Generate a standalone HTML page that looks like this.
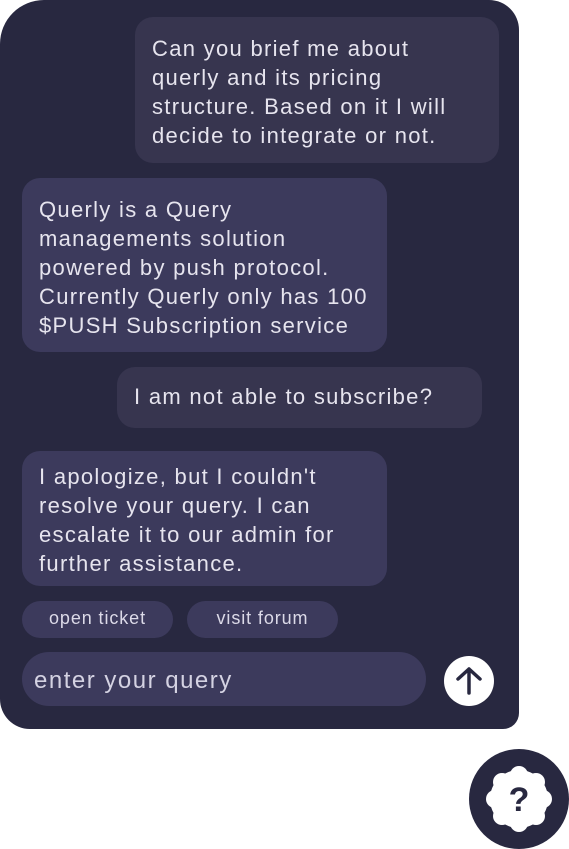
<!DOCTYPE html>
<html><head><style>
body{margin:0;width:569px;height:849px;background:#fff;position:relative;overflow:hidden;font-family:"Liberation Sans",sans-serif;}
.panel{position:absolute;left:0;top:0;width:519px;height:729px;background:#282840;border-radius:44px 30px 16px 30px;}
.b{position:absolute;color:#e6e4ee;font-size:22px;letter-spacing:1.3px;line-height:29px;border-radius:18px;box-sizing:border-box;padding:17px 17px;white-space:nowrap;}
.u{background:#37354f}
.bot{background:#3c3a5c}
.btn{position:absolute;top:601px;height:37px;border-radius:19px;background:#3c3a5c;color:#dcdae8;font-size:18px;letter-spacing:0.9px;line-height:35px;text-align:center;}
</style></head><body>
<div class="panel">
<div class="b u" style="left:135px;top:17px;width:364px;height:146px;">Can you brief me about<br>querly and its pricing<br>structure. Based on it I will<br>decide to integrate or not.</div>
<div class="b bot" style="left:22px;top:178px;width:365px;height:174px;">Querly is a Query<br>managements solution<br>powered by push protocol.<br>Currently Querly only has 100<br>$PUSH Subscription service</div>
<div class="b u" style="left:117px;top:367px;width:365px;height:61px;padding-top:15px;">I am not able to subscribe?</div>
<div class="b bot" style="left:22px;top:451px;width:365px;height:135px;padding-top:11px;">I apologize, but I couldn't<br>resolve your query. I can<br>escalate it to our admin for<br>further assistance.</div>
<div class="btn" style="left:22px;width:151px;">open ticket</div>
<div class="btn" style="left:187px;width:151px;">visit forum</div>
<div style="position:absolute;left:22px;top:652px;width:404px;height:54px;border-radius:27px;background:#3c3a5c;color:#d4d2e2;font-size:24px;letter-spacing:1.5px;line-height:57px;padding-left:12px;box-sizing:border-box;">enter your query</div>
<svg style="position:absolute;left:444px;top:656px" width="50" height="50" viewBox="0 0 50 50"><circle cx="25" cy="25" r="25" fill="#fff"/><path d="M25 37V13M14 23L25 13L36 23" stroke="#282840" stroke-width="3.5" fill="none" stroke-linecap="round" stroke-linejoin="round"/></svg>
</div>
<svg style="position:absolute;left:469px;top:749px" width="100" height="100" viewBox="0 0 100 100"><circle cx="50" cy="50" r="50" fill="#282840"/>
<g fill="#fff"><circle cx="50" cy="50" r="29"/><circle cx="50" cy="26" r="9"/><circle cx="67" cy="33" r="9"/><circle cx="74" cy="50" r="9"/><circle cx="67" cy="67" r="9"/><circle cx="50" cy="74" r="9"/><circle cx="33" cy="67" r="9"/><circle cx="26" cy="50" r="9"/><circle cx="33" cy="33" r="9"/></g>
<text x="50" y="62" font-size="34" font-weight="bold" text-anchor="middle" fill="#282840" font-family="Liberation Sans">?</text></svg>
</body></html>
